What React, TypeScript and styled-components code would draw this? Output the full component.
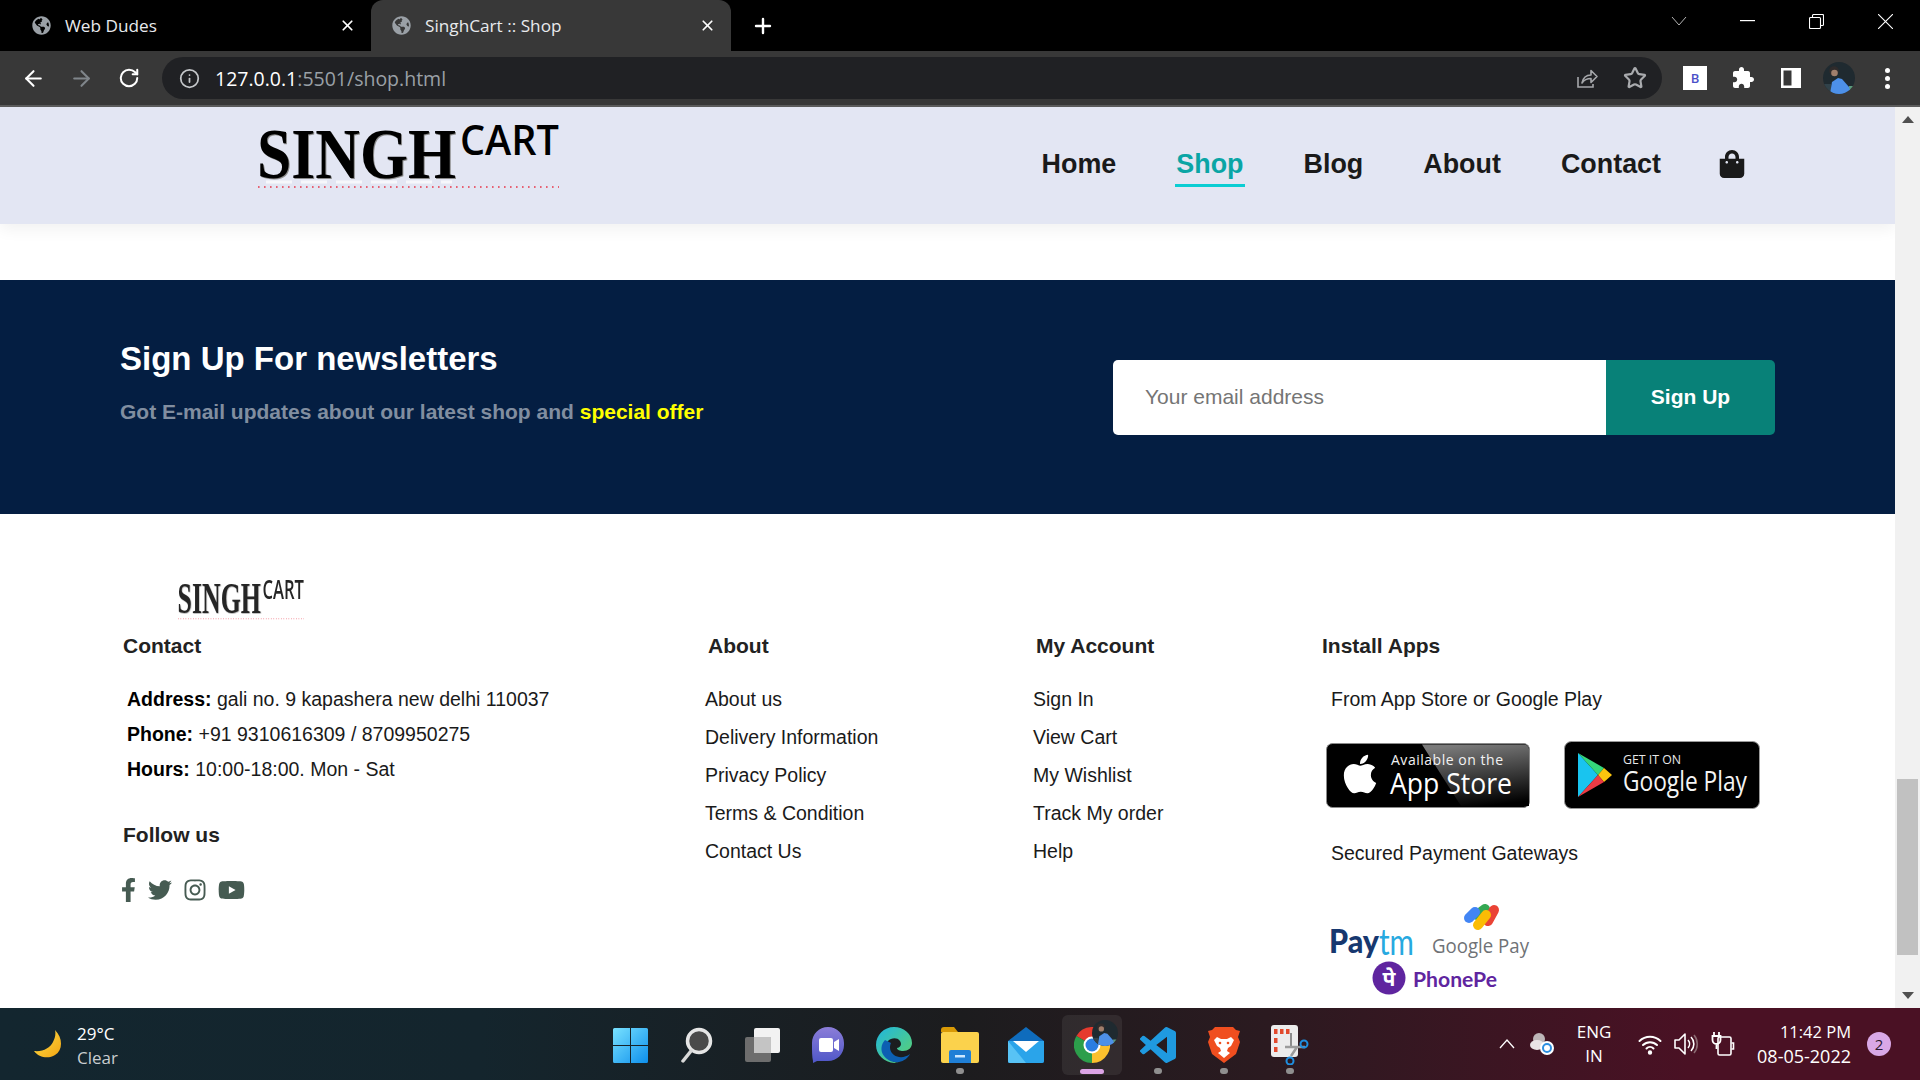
import React from "react";
import styled, { createGlobalStyle } from "styled-components";
import { ArrowLeft, ArrowRight, Info, Plus, RotateCw, Star, X } from "lucide-react";
import {
  FaApple,
  FaFacebookF,
  FaGlobeAmericas,
  FaInstagram,
  FaShoppingBag,
  FaTwitter,
  FaYoutube,
} from "react-icons/fa";

const GlobalStyle = createGlobalStyle`
  html, body {
    margin: 0;
    padding: 0;
    overflow: hidden;
  }
  * {
    box-sizing: border-box;
  }
  body {
    font-family: "Liberation Sans", Arial, sans-serif;
  }
`;

const UI_FONT = `"Open Sans", "Noto Sans", sans-serif`;
const navLinks = ["Home", "Shop", "Blog", "About", "Contact"];
const aboutLinks = ["About us", "Delivery Information", "Privacy Policy", "Terms & Condition", "Contact Us"];
const accountLinks = ["Sign In", "View Cart", "My Wishlist", "Track My order", "Help"];
const contactRows = [
  ["Address:", "gali no. 9 kapashera new delhi 110037"],
  ["Phone:", "+91 9310616309 / 8709950275"],
  ["Hours:", "10:00-18:00. Mon - Sat"],
];

const Logo = ({ width, height, faded }: { width: number; height: number; faded?: boolean }) => (
  <LogoSvg
    width={width}
    height={height}
    $faded={faded}
    viewBox="0 0 301 64"
    preserveAspectRatio="none"
  >
    {!faded && (
      <line x1="8" y1="57" x2="194" y2="57" stroke="#fff" strokeWidth="3" strokeDasharray="26 9" opacity="0.7" />
    )}
    <SinghText
      x="-1"
      y="53"
      fontFamily="'Liberation Serif', serif"
      fontWeight="700"
      fontSize="71"
      textLength="199"
      lengthAdjust="spacingAndGlyphs"
    >
      SINGH
    </SinghText>
    <text
      x="202"
      y="30"
      fontFamily="'Open Sans', sans-serif"
      fontWeight="600"
      fontSize="42"
      textLength="99"
      lengthAdjust="spacingAndGlyphs"
    >
      CART
    </text>
    <line x1="0" y1="62" x2="301" y2="62" stroke="#e8364a" strokeWidth="1.6" strokeDasharray="1.6 4.4" />
  </LogoSvg>
);

const SharedIcon = () => (
  <svg width="24" height="24" viewBox="0 0 24 24" fill="none" stroke="#a5a7aa" strokeWidth="1.6">
    <path d="M3 11v10h15v-3" />
    <path d="M7 17c1-5 4-8 9-8V4.500l6 6-6 6V12.500c-4 0-7 1.500-9 4.500z" strokeLinejoin="round" />
  </svg>
);

const PuzzleIcon = () => (
  <svg width="24" height="24" viewBox="0 0 24 24">
    <path
      d="M20.500 11H19V7c0-1.100-.9-2-2-2h-4V3.500C13 2.120 11.880 1 10.500 1S8 2.120 8 3.500V5H4c-1.100 0-1.990.9-1.990 2v3.800H3.500c1.490 0 2.700 1.210 2.700 2.700s-1.210 2.700-2.700 2.700H2V20c0 1.100.9 2 2 2h3.800v-1.500c0-1.490 1.210-2.700 2.700-2.700 1.490 0 2.700 1.210 2.700 2.700V22H17c1.100 0 2-.9 2-2v-4h1.500c1.380 0 2.500-1.120 2.500-2.500S21.880 11 20.500 11z"
      fill="#fff"
    />
  </svg>
);

const SidebarIcon = () => (
  <svg width="22" height="22" viewBox="0 0 22 22">
    <rect x="1" y="1" width="20" height="20" fill="#fff" />
    <rect x="3.500" y="3.500" width="8" height="15" fill="#383838" />
  </svg>
);

const Avatar = () => (
  <svg width="32" height="32" viewBox="0 0 32 32">
    <defs>
      <clipPath id="avatarClip">
        <circle cx="16" cy="16" r="16" />
      </clipPath>
    </defs>
    <g clipPath="url(#avatarClip)">
      <rect width="32" height="32" fill="#1f2a30" />
      <rect x="0" y="22" width="8" height="10" fill="#31424a" />
      <rect x="26" y="24" width="6" height="8" fill="#5d9c7c" />
      <circle cx="11" cy="9" r="4.800" fill="#2f2b2b" />
      <circle cx="11.500" cy="11" r="3.300" fill="#a07f6c" />
      <path d="M7 32l2-12 6-4 4 1 7 8 2 7z" fill="#4d90e8" />
    </g>
  </svg>
);

const MoonIcon = () => (
  <svg width="28" height="28" viewBox="0 0 28 28">
    <defs>
      <linearGradient id="moonFill" x1="0" y1="0" x2="1" y2="1">
        <stop offset="0" stopColor="#ffe14a" />
        <stop offset="1" stopColor="#f3a512" />
      </linearGradient>
    </defs>
    <path d="M21 0C29 8 29 20 21 25 15 29 5 28 0 21 9 22 16 18 19 12 21 8 22 4 21 0z" fill="url(#moonFill)" />
  </svg>
);

const WindowsIcon = () => (
  <svg width="35" height="35" viewBox="0 0 35 35">
    <defs>
      <linearGradient id="winFill" x1="0" y1="0" x2="1" y2="1">
        <stop offset="0" stopColor="#79e2ff" />
        <stop offset="1" stopColor="#0d8fec" />
      </linearGradient>
    </defs>
    <path d="M0 1.500A1.500 1.500 0 0 1 1.500 0H17v17H0zM18 0h15.500A1.500 1.500 0 0 1 35 1.500V17H18zM0 18h17v17H1.500A1.500 1.500 0 0 1 0 33.500zM18 18h17v15.500a1.500 1.500 0 0 1-1.500 1.500H18z" fill="url(#winFill)" />
  </svg>
);

const SearchIcon = () => (
  <svg width="34" height="36" viewBox="0 0 34 36">
    <circle cx="20" cy="14" r="11.500" fill="#4a4a4a" stroke="#e6e6e6" strokeWidth="3.500" />
    <line x1="12" y1="24" x2="4" y2="34" stroke="#d9d9d9" strokeWidth="3.500" strokeLinecap="round" />
  </svg>
);

const TaskViewIcon = () => (
  <svg width="36" height="36" viewBox="0 0 36 36">
    <rect x="1" y="10" width="26" height="25" rx="2" fill="#6d6d6d" />
    <rect x="10" y="1" width="26" height="25" rx="2" fill="#f2f2f2" />
    <path d="M10 10h17v16H10z" fill="#c4c4c4" />
  </svg>
);

const MeetIcon = () => (
  <svg width="34" height="36" viewBox="0 0 34 36">
    <defs>
      <linearGradient id="meetFill" x1="0" y1="0" x2="0" y2="1">
        <stop offset="0" stopColor="#8b7dd8" />
        <stop offset="1" stopColor="#4f57c8" />
      </linearGradient>
    </defs>
    <path d="M17 0c9 0 16 7 16 16v2c0 9-7 16-16 16H6l-4 2v-2C1 30 1 24 1 18v-2C1 7 8 0 17 0z" fill="url(#meetFill)" />
    <rect x="8" y="11" width="14" height="14" rx="2" fill="#fff" />
    <path d="M23 15l5-3v12l-5-3z" fill="#fff" />
  </svg>
);

const EdgeIcon = () => (
  <svg width="36" height="36" viewBox="0 0 36 36">
    <defs>
      <linearGradient id="edgeTop" x1="0" y1="0" x2="1" y2="1">
        <stop offset="0" stopColor="#1fb6e0" />
        <stop offset="1" stopColor="#5fd36a" />
      </linearGradient>
    </defs>
    <path d="M18 0c10 0 18 7 18 16 0 5-4 8-9 8-3 0-6-1-6-3 4-1 5-4 3-7-3-4-9-3-12 0-4 4-4 12 1 17 3 3 6 5 10 5C10 37 0 29 0 18 0 8 8 0 18 0z" fill="url(#edgeTop)" />
    <path d="M9 13c-4 4-5 11-1 16 3 4 9 7 15 6 5-1 9-4 11-8-5 4-12 4-16 1-4-3-5-8-3-12-2-1-4-2-6-3z" fill="#0c5fb2" />
  </svg>
);

const FolderIcon = () => (
  <svg width="38" height="36" viewBox="0 0 38 36">
    <path d="M0 3a3 3 0 0 1 3-3h10l4 5H0z" fill="#d99a06" />
    <rect x="0" y="5" width="38" height="31" rx="2" fill="#fbd24c" />
    <path d="M10 23h18a2 2 0 0 1 2 2v11H8V25a2 2 0 0 1 2-2z" fill="#1f7fd6" />
    <rect x="14" y="28" width="10" height="2.500" fill="#cde8ff" />
  </svg>
);

const MailIcon = () => (
  <svg width="36" height="36" viewBox="0 0 36 36">
    <path d="M18 0L0 14v20a2 2 0 0 0 2 2h32a2 2 0 0 0 2-2V14z" fill="#0f6cbd" />
    <path d="M0 14h36v20a2 2 0 0 1-2 2H2a2 2 0 0 1-2-2z" fill="#2aa4ea" />
    <path d="M5 14h26L18 25z" fill="#fff" />
    <path d="M0 14l18 22H2a2 2 0 0 1-2-2z" fill="#58c3f5" />
  </svg>
);

const ChromeIcon = () => (
  <svg width="36" height="36" viewBox="0 0 36 36">
    <path d="M18 18L2.400 9A18 18 0 0 1 33.600 9z" fill="#e53a2e" />
    <path d="M18 18l-15.600-9A18 18 0 0 0 18 36z" fill="#2c9e4b" />
    <path d="M18 18l15.600-9A18 18 0 0 1 18 36z" fill="#fbc02d" />
    <circle cx="18" cy="18" r="8.500" fill="#fff" />
    <circle cx="18" cy="18" r="6.500" fill="#2a7de1" />
  </svg>
);

const VsCodeIcon = () => (
  <svg width="36" height="36" viewBox="0 0 24 24">
    <path
      d="M23.150 2.587L18.210.21a1.494 1.494 0 0 0-1.705.29l-9.460 8.630-4.120-3.128a.999.999 0 0 0-1.276.057L.327 7.261A1 1 0 0 0 .326 8.740L3.899 12 .326 15.260a1 1 0 0 0 .001 1.479L1.650 17.940a.999.999 0 0 0 1.276.057l4.120-3.128 9.460 8.630a1.492 1.492 0 0 0 1.704.29l4.942-2.377A1.500 1.500 0 0 0 24 20.060V3.939a1.500 1.500 0 0 0-.850-1.352zm-5.146 14.861L10.826 12l7.178-5.448v10.896z"
      fill="#1f9ae0"
    />
  </svg>
);

const BraveIcon = () => (
  <svg width="32" height="36" viewBox="0 0 32 36">
    <path d="M7 0h18l3 3 4 1-2 6 2 5-4 12-12 9-12-9L0 15l2-5-2-6 4-1z" fill="#f04e1f" />
    <path d="M9 10l4 2h6l4-2 3 3-3 6-3 2-1 3 3 2-6 5-6-5 3-2-1-3-3-2-3-6z" fill="#fff" />
    <circle cx="12" cy="16" r="1.300" fill="#f04e1f" />
    <circle cx="20" cy="16" r="1.300" fill="#f04e1f" />
  </svg>
);

const SnipIcon = () => (
  <svg width="38" height="40" viewBox="0 0 38 40">
    <rect x="0" y="0" width="27" height="32" rx="3" fill="#ececec" />
    <rect x="3" y="4" width="3.500" height="5" fill="#e2492c" />
    <rect x="9" y="4" width="3.500" height="5" fill="#e2492c" />
    <rect x="15" y="4" width="3.500" height="5" fill="#e2492c" />
    <rect x="3" y="13" width="3.500" height="5" fill="#e2492c" />
    <rect x="3" y="22" width="3.500" height="5" fill="#e2492c" />
    <path d="M20 8v14h6" stroke="#8d8d8d" strokeWidth="2" fill="none" />
    <path d="M14 22h20M26 22l-6 9" stroke="#9b9b9b" strokeWidth="2.500" />
    <circle cx="33" cy="19" r="3.500" fill="none" stroke="#1f8fe0" strokeWidth="2" />
    <circle cx="19" cy="36" r="3.500" fill="none" stroke="#1f8fe0" strokeWidth="2" />
  </svg>
);

const CloudIcon = () => (
  <svg width="26" height="26" viewBox="0 0 26 26">
    <circle cx="10" cy="8" r="6" fill="#bdb6b8" />
    <ellipse cx="8" cy="14" rx="7" ry="5" fill="#e8e4e5" />
    <circle cx="18" cy="17" r="7" fill="#fff" />
    <circle cx="18" cy="17" r="4" fill="none" stroke="#2d8fe0" strokeWidth="2" />
  </svg>
);

const WifiIcon = () => (
  <svg width="24" height="22" viewBox="0 0 24 22" fill="none" stroke="#fff" strokeWidth="2" strokeLinecap="round">
    <path d="M1.500 8a15 15 0 0 1 21 0M5 12a10 10 0 0 1 14 0M8.500 15.500a5 5 0 0 1 7 0" />
    <circle cx="12" cy="19.500" r="1.200" fill="#fff" />
  </svg>
);

const VolumeIcon = () => (
  <svg width="26" height="24" viewBox="0 0 26 24" fill="none" stroke="#fff" strokeWidth="1.600">
    <path d="M2 8h4l6-6v20l-6-6H2z" strokeLinejoin="round" />
    <path d="M15 8a6 6 0 0 1 0 8M18 5a10 10 0 0 1 0 14" />
    <path d="M21 3a14 14 0 0 1 0 18" stroke="#8b6a72" />
  </svg>
);

const BatteryIcon = () => (
  <svg width="24" height="26" viewBox="0 0 24 26" fill="none" stroke="#fff" strokeWidth="1.600">
    <rect x="7" y="6" width="13" height="18" rx="1.500" />
    <path d="M20.500 12h2v6h-2" />
    <path d="M3 1v4M8 1v4M1.500 5h8v4a4 4 0 0 1-8 0zM5.500 13v5" strokeWidth="1.800" />
  </svg>
);

const AppStoreBadge = () => (
  <BadgeSvg width="204" height="65" viewBox="0 0 204 65">
    <defs>
      <linearGradient id="gloss" x1="0.400" y1="0" x2="0.600" y2="1">
        <stop offset="0" stopColor="#7a7a7a" />
        <stop offset="1" stopColor="#000" />
      </linearGradient>
    </defs>
    <rect x="0.500" y="0.500" width="203" height="64" rx="6" fill="#000" stroke="#8a8a8a" />
    <path d="M96 1.500h102a5 5 0 0 1 5 5V63h-68z" fill="url(#gloss)" />
    <FaApple x="12" y="9" size={44} color="#fff" />
    <text x="65" y="22" fontFamily="'Open Sans', sans-serif" fontSize="14" fill="#f2f2f2" textLength="112" lengthAdjust="spacing">
      Available on the
    </text>
    <text x="64" y="51" fontFamily="'Open Sans', sans-serif" fontSize="30" fill="#fff" textLength="122" lengthAdjust="spacingAndGlyphs">
      App Store
    </text>
  </BadgeSvg>
);

const PlayBadge = () => (
  <BadgeSvg width="196" height="68" viewBox="0 0 196 68">
    <rect x="0.500" y="0.500" width="195" height="67" rx="7" fill="#000" stroke="#9a9a9a" />
    <path d="M14 12l20 22-20 22z" fill="#19c4ef" />
    <path d="M14 12l26 15-6 7z" fill="#35d67a" />
    <path d="M40 27l8 7-8 7-6-7z" fill="#fcc60e" />
    <path d="M14 56l26-15-6-7z" fill="#ec3b45" />
    <text x="59" y="23" fontFamily="'Open Sans', sans-serif" fontSize="13" fill="#e8e8e8" textLength="58" lengthAdjust="spacingAndGlyphs">
      GET IT ON
    </text>
    <text x="59" y="50" fontFamily="'Open Sans', sans-serif" fontSize="28" fill="#f4f4f4" textLength="124" lengthAdjust="spacingAndGlyphs">
      Google Play
    </text>
  </BadgeSvg>
);

const PaymentLogos = () => (
  <PaymentSvg width="205" height="100" viewBox="0 0 205 100">
    <text x="2" y="50" fontFamily="'Lato', sans-serif" fontWeight="900" fontSize="33" fill="#17386f" textLength="50" lengthAdjust="spacingAndGlyphs">
      Pay
    </text>
    <text x="52" y="52" fontFamily="'Lato', sans-serif" fontWeight="400" fontSize="36" fill="#27a9e0" textLength="35" lengthAdjust="spacingAndGlyphs">
      tm
    </text>
    <g strokeWidth="10" strokeLinecap="round" fill="none">
      <path d="M150 12l8-6" stroke="#34a853" />
      <path d="M167 7l-6 11" stroke="#ea4335" />
      <path d="M142 15l6-6" stroke="#4285f4" />
      <path d="M151 22l8-10" stroke="#fbbc04" />
    </g>
    <text x="105" y="50" fontFamily="'Open Sans', sans-serif" fontSize="20" fill="#6f7276" textLength="97" lengthAdjust="spacingAndGlyphs">
      Google Pay
    </text>
    <circle cx="62" cy="75" r="16.500" fill="#5f259f" />
    <text x="62" y="83" textAnchor="middle" fontFamily="'Noto Sans', 'Liberation Sans', sans-serif" fontWeight="700" fontSize="21" fill="#fff">
      पे
    </text>
    <text x="86" y="84" fontFamily="'Lato', sans-serif" fontWeight="700" fontSize="21" fill="#5f259f" textLength="84" lengthAdjust="spacingAndGlyphs">
      PhonePe
    </text>
  </PaymentSvg>
);

const taskbarIcons = [
  { id: "start", icon: <WindowsIcon /> },
  { id: "search", icon: <SearchIcon /> },
  { id: "taskview", icon: <TaskViewIcon /> },
  { id: "meet", icon: <MeetIcon /> },
  { id: "edge", icon: <EdgeIcon /> },
  { id: "explorer", icon: <FolderIcon />, running: true },
  { id: "mail", icon: <MailIcon /> },
  { id: "chrome", icon: <ChromeIcon />, running: true, active: true },
  { id: "vscode", icon: <VsCodeIcon />, running: true },
  { id: "brave", icon: <BraveIcon />, running: true },
  { id: "snip", icon: <SnipIcon />, running: true },
];

const App = () => {
  return (
    <Screen>
      <GlobalStyle />
      <TabBar>
        <Tab>
          <FaGlobeAmericas size={19} color="#9aa0a6" />
          <TabTitle>Web Dudes</TabTitle>
          <X size={17} color="#fff" strokeWidth={2.4} />
        </Tab>
        <Tab $active>
          <FaGlobeAmericas size={19} color="#9aa0a6" />
          <TabTitle>SinghCart :: Shop</TabTitle>
          <X size={17} color="#fff" strokeWidth={2.4} />
        </Tab>
        <NewTab>
          <Plus size={24} color="#fff" strokeWidth={2.4} />
        </NewTab>
        <WindowControls>
          <ControlButton>
            <svg width="16" height="10" viewBox="0 0 16 10" fill="none" stroke="#b5b5b5">
              <path d="M1 1l7 8 7-8" />
            </svg>
          </ControlButton>
          <ControlButton>
            <svg width="15" height="2" viewBox="0 0 15 2">
              <rect width="15" height="1.200" fill="#fff" />
            </svg>
          </ControlButton>
          <ControlButton>
            <svg width="15" height="15" viewBox="0 0 15 15" fill="none" stroke="#fff" strokeWidth="1.100">
              <rect x="0.500" y="3.500" width="11" height="11" rx="1" />
              <path d="M3.500 3.500V1.500a1 1 0 0 1 1-1h9a1 1 0 0 1 1 1v9a1 1 0 0 1-1 1h-2" />
            </svg>
          </ControlButton>
          <ControlButton>
            <svg width="15" height="15" viewBox="0 0 15 15" stroke="#fff" strokeWidth="1.100">
              <path d="M0 0l15 15M15 0L0 15" />
            </svg>
          </ControlButton>
        </WindowControls>
      </TabBar>

      <Toolbar>
        <ToolSlot>
          <ArrowLeft size={25} color="#fff" />
        </ToolSlot>
        <ToolSlot>
          <ArrowRight size={25} color="#80868b" />
        </ToolSlot>
        <ToolSlot>
          <RotateCw size={22} color="#fff" strokeWidth={2.2} />
        </ToolSlot>
        <Omnibox>
          <Info size={21} color="#c4c7ca" />
          <UrlText>
            127.0.0.1<UrlMuted>:5501/shop.html</UrlMuted>
          </UrlText>
          <OmniboxActions>
            <SharedIcon />
            <Star size={24} color="#a9abae" strokeWidth={2.2} />
          </OmniboxActions>
        </Omnibox>
        <ToolSlot>
          <ExtensionBadge>B</ExtensionBadge>
        </ToolSlot>
        <ToolSlot>
          <PuzzleIcon />
        </ToolSlot>
        <ToolSlot>
          <SidebarIcon />
        </ToolSlot>
        <ToolSlot>
          <Avatar />
        </ToolSlot>
        <ToolSlot>
          <MenuDots>
            <i />
            <i />
            <i />
          </MenuDots>
        </ToolSlot>
      </Toolbar>

      <Viewport>
        <Page>
          <NavBar>
            <Logo width={301} height={64} />
            <NavList>
              {navLinks.map((link) => (
                <NavItem key={link} $active={link === "Shop"}>
                  {link}
                </NavItem>
              ))}
              <BagLink>
                <FaShoppingBag size={28} color="#1a1a1a" />
              </BagLink>
            </NavList>
          </NavBar>

          <Newsletter>
            <NewsText>
              <NewsTitle>Sign Up For newsletters</NewsTitle>
              <NewsSub>
                Got E-mail updates about our latest shop and <Highlight>special offer</Highlight>
              </NewsSub>
            </NewsText>
            <SignupForm>
              <EmailInput placeholder="Your email address" readOnly />
              <SignupButton>Sign Up</SignupButton>
            </SignupForm>
          </Newsletter>

          <Footer>
            <FooterLogo>
              <Logo width={126} height={40} faded />
            </FooterLogo>
            <FooterGrid>
              <FooterColumn>
                <FooterHeading>Contact</FooterHeading>
                <ContactList>
                  {contactRows.map(([label, value]) => (
                    <ContactRow key={label}>
                      <strong>{label}</strong> {value}
                    </ContactRow>
                  ))}
                </ContactList>
                <FollowHeading>Follow us</FollowHeading>
                <SocialRow>
                  <SocialIcon $width={15}>
                    <FaFacebookF />
                  </SocialIcon>
                  <SocialIcon $width={24}>
                    <FaTwitter />
                  </SocialIcon>
                  <SocialIcon $width={22}>
                    <FaInstagram />
                  </SocialIcon>
                  <SocialIcon $width={27}>
                    <FaYoutube />
                  </SocialIcon>
                </SocialRow>
              </FooterColumn>

              <FooterColumn>
                <FooterHeading $indent={3}>About</FooterHeading>
                <LinkList>
                  {aboutLinks.map((link) => (
                    <FooterLink key={link}>{link}</FooterLink>
                  ))}
                </LinkList>
              </FooterColumn>

              <FooterColumn>
                <FooterHeading $indent={3}>My Account</FooterHeading>
                <LinkList>
                  {accountLinks.map((link) => (
                    <FooterLink key={link}>{link}</FooterLink>
                  ))}
                </LinkList>
              </FooterColumn>

              <FooterColumn>
                <FooterHeading>Install Apps</FooterHeading>
                <InstallText $top={22}>From App Store or Google Play</InstallText>
                <BadgeRow>
                  <AppStoreBadge />
                  <PlayBadge />
                </BadgeRow>
                <InstallText $top={25}>Secured Payment Gateways</InstallText>
                <PaymentLogos />
              </FooterColumn>
            </FooterGrid>
          </Footer>
        </Page>

        <ScrollTrack>
          <ScrollArrow $up />
          <ScrollThumb />
          <ScrollArrow />
        </ScrollTrack>
      </Viewport>

      <Taskbar>
        <Weather>
          <MoonIcon />
          <WeatherText>
            <span>29°C</span>
            <WeatherMuted>Clear</WeatherMuted>
          </WeatherText>
        </Weather>
        <TaskIcons>
          {taskbarIcons.map((item) => (
            <TaskSlot key={item.id} $active={item.active}>
              {item.icon}
              {item.id === "chrome" && (
                <ChromeAvatar>
                  <Avatar />
                </ChromeAvatar>
              )}
              {item.running && <TaskDot $active={item.active} />}
            </TaskSlot>
          ))}
        </TaskIcons>
        <Tray>
          <TrayItem $gap={0}>
            <svg width="16" height="10" viewBox="0 0 16 10" fill="none" stroke="#fff" strokeWidth="1.300">
              <path d="M1 9l7-8 7 8" />
            </svg>
          </TrayItem>
          <TrayItem $gap={14}>
            <CloudIcon />
          </TrayItem>
          <TrayText $gap={18}>
            <span>ENG</span>
            <span>IN</span>
          </TrayText>
          <TrayItem $gap={23}>
            <WifiIcon />
          </TrayItem>
          <TrayItem $gap={11}>
            <VolumeIcon />
          </TrayItem>
          <TrayItem $gap={12}>
            <BatteryIcon />
          </TrayItem>
          <Clock>
            <span>11:42 PM</span>
            <ClockDate>08-05-2022</ClockDate>
          </Clock>
          <NotifyBadge>2</NotifyBadge>
        </Tray>
      </Taskbar>
    </Screen>
  );
};
export default App;

const LogoSvg = styled.svg<{ $faded?: boolean }>`
  display: block;
  flex-shrink: 0;
  overflow: visible;
  opacity: ${({ $faded }) => ($faded ? 0.85 : 1)};
`;

const SinghText = styled.text`
  filter: drop-shadow(1.5px 1px 0 #8a8a8a);
`;

const BadgeSvg = styled.svg`
  display: block;
  flex-shrink: 0;
`;

const PaymentSvg = styled.svg`
  display: block;
  margin: 31px 0 0 5px;
`;

const Screen = styled.div`
  display: flex;
  flex-direction: column;
  width: 1920px;
  height: 1080px;
  overflow: hidden;
  background-color: #fff;
`;

const TabBar = styled.div`
  display: flex;
  align-items: stretch;
  height: 51px;
  padding-left: 11px;
  background-color: #000;
`;

const Tab = styled.div<{ $active?: boolean }>`
  display: flex;
  align-items: center;
  gap: 14px;
  width: 360px;
  padding: 0 15px 0 21px;
  border-radius: 12px 12px 0 0;
  background-color: ${({ $active }) => ($active ? "#383838" : "transparent")};
  color: #e8eaed;
  font-family: ${UI_FONT};
  font-size: 17.2px;
`;

const TabTitle = styled.span`
  flex: 1;
  white-space: nowrap;
`;

const NewTab = styled.div`
  display: flex;
  align-items: center;
  margin-left: 20px;
`;

const WindowControls = styled.div`
  display: flex;
  margin-left: auto;
`;

const ControlButton = styled.div`
  display: flex;
  align-items: center;
  justify-content: center;
  width: 69px;
  height: 42px;
`;

const Toolbar = styled.div`
  display: flex;
  align-items: center;
  height: 56px;
  padding: 0 9px;
  background-color: #383838;
  border-bottom: 2px solid #5c5c5c;
`;

const ToolSlot = styled.div`
  display: flex;
  align-items: center;
  justify-content: center;
  width: 48px;
  height: 42px;
  flex-shrink: 0;
`;

const Omnibox = styled.div`
  display: flex;
  align-items: center;
  gap: 15px;
  width: 1500px;
  height: 42px;
  margin: 0 9px;
  padding: 0 15px 0 17px;
  border-radius: 21px;
  background-color: #202124;
`;

const UrlText = styled.span`
  color: #fff;
  font-family: ${UI_FONT};
  font-size: 19.5px;
`;

const UrlMuted = styled.span`
  color: #9aa0a6;
`;

const OmniboxActions = styled.div`
  display: flex;
  align-items: center;
  gap: 24px;
  margin-left: auto;
`;

const ExtensionBadge = styled.div`
  display: flex;
  align-items: center;
  justify-content: center;
  width: 24px;
  height: 24px;
  background-color: #fff;
  color: #4a50c8;
  font-family: ${UI_FONT};
  font-size: 13px;
  font-weight: 600;
`;

const MenuDots = styled.div`
  display: flex;
  flex-direction: column;
  gap: 3px;

  i {
    display: block;
    width: 5px;
    height: 5px;
    border-radius: 50%;
    background-color: #fff;
  }
`;

const Viewport = styled.div`
  display: flex;
  height: 901px;
`;

const Page = styled.div`
  flex: 1;
  min-width: 0;
`;

const NavBar = styled.nav`
  display: flex;
  justify-content: space-between;
  align-items: flex-start;
  height: 117px;
  padding: 18px 149px 0 258px;
  background-color: #e3e6f3;
  box-shadow: 0 5px 15px rgba(0, 0, 0, 0.06);
`;

const NavList = styled.ul`
  display: flex;
  align-items: center;
  gap: 60px;
  margin: 24px 0 0;
  padding: 0;
  list-style: none;
`;

const NavItem = styled.li<{ $active?: boolean }>`
  position: relative;
  color: ${({ $active }) => ($active ? "#0aa5a5" : "#1a1a1a")};
  font-size: 26.9px;
  font-weight: 700;
  line-height: 30px;

  ${({ $active }) =>
    $active &&
    `
    &::after {
      content: "";
      position: absolute;
      left: -1px;
      right: -1px;
      bottom: -8px;
      height: 3px;
      background-color: #0ccdd3;
    }
  `}
`;

const BagLink = styled.li`
  display: flex;
  margin: -1px 0 0 -3px;
`;

const Newsletter = styled.section`
  display: flex;
  justify-content: space-between;
  align-items: center;
  height: 234px;
  margin-top: 56px;
  padding: 0 120px;
  background-color: #041e42;
`;

const NewsText = styled.div`
  align-self: flex-start;
  padding-top: 60px;
`;

const NewsTitle = styled.h2`
  margin: 0 0 22px;
  color: #fff;
  font-size: 33px;
  font-weight: 700;
  line-height: 38px;
`;

const NewsSub = styled.p`
  margin: 0;
  color: #818ea0;
  font-size: 21px;
  font-weight: 700;
  line-height: 24px;
`;

const Highlight = styled.span`
  color: #ffff00;
`;

const SignupForm = styled.div`
  display: flex;
  width: 662px;
  height: 75px;
`;

const EmailInput = styled.input`
  width: 493px;
  height: 100%;
  padding: 0 32px;
  border: none;
  border-radius: 5px 0 0 5px;
  outline: none;
  background-color: #fff;
  font-family: "Liberation Sans", Arial, sans-serif;
  font-size: 21px;

  &::placeholder {
    color: #757575;
  }
`;

const SignupButton = styled.button`
  flex: 1;
  border: none;
  border-radius: 0 5px 5px 0;
  background-color: #088178;
  color: #fff;
  font-family: "Liberation Sans", Arial, sans-serif;
  font-size: 21px;
  font-weight: 700;
`;

const Footer = styled.footer`
  height: 494px;
  padding-top: 66px;
  overflow: hidden;
  background-color: #fff;
  color: #1a1a1a;
`;

const FooterLogo = styled.div`
  margin-left: 178px;
`;

const FooterGrid = styled.div`
  display: grid;
  grid-template-columns: 582px 328px 289px 1fr;
  margin-top: 14px;
  padding-left: 123px;
`;

const FooterColumn = styled.div`
  min-width: 0;
`;

const FooterHeading = styled.h4<{ $indent?: number }>`
  margin: 0;
  padding-left: ${({ $indent }) => $indent ?? 0}px;
  color: #222;
  font-size: 21px;
  font-weight: 700;
  line-height: 24px;
`;

const FollowHeading = styled(FooterHeading)`
  margin-top: 36px;
`;

const ContactList = styled.div`
  margin-top: 24px;
  padding-left: 4px;
`;

const ContactRow = styled.p`
  margin: 0;
  font-size: 19.5px;
  line-height: 35px;

  strong {
    color: #000;
  }
`;

const SocialRow = styled.div`
  display: flex;
  align-items: center;
  gap: 12px;
  margin: 31px 0 0 -2px;
  color: #465b52;
`;

const SocialIcon = styled.span<{ $width: number }>`
  display: block;
  width: ${({ $width }) => $width}px;
  height: 24px;

  svg {
    display: block;
    width: 100%;
    height: 100%;
  }
`;

const LinkList = styled.div`
  margin-top: 22px;
`;

const FooterLink = styled.div`
  font-size: 19.5px;
  line-height: 38px;
`;

const InstallText = styled.p<{ $top: number }>`
  margin: ${({ $top }) => $top}px 0 0 9px;
  font-size: 19.5px;
  line-height: 38px;
`;

const BadgeRow = styled.div`
  display: flex;
  align-items: center;
  gap: 34px;
  margin: 23px 0 0 4px;
`;

const ScrollTrack = styled.div`
  display: flex;
  flex-direction: column;
  align-items: center;
  width: 25px;
  background-color: #f1f1f1;
`;

const ScrollArrow = styled.div<{ $up?: boolean }>`
  width: 0;
  height: 0;
  margin: ${({ $up }) => ($up ? "9px 0 auto" : "0 0 9px")};
  border-left: 6px solid transparent;
  border-right: 6px solid transparent;
  border-${({ $up }) => ($up ? "bottom" : "top")}: 7px solid #505050;
`;

const ScrollThumb = styled.div`
  width: 21px;
  height: 176px;
  margin-bottom: 37px;
  background-color: #c1c1c1;
`;

const Taskbar = styled.div`
  display: grid;
  grid-template-columns: 1fr auto 1fr;
  align-items: center;
  height: 72px;
  background: linear-gradient(90deg, #13262f 0%, #14252d 25%, #1c1c1e 50%, #2b1a20 66%, #4a1124 88%, #4a1124 100%);
`;

const Weather = styled.div`
  display: flex;
  align-items: center;
  gap: 15px;
  padding-left: 34px;
`;

const WeatherText = styled.div`
  display: flex;
  flex-direction: column;
  padding-top: 4px;
  color: #fff;
  font-family: ${UI_FONT};
  font-size: 17px;
  line-height: 24px;
`;

const WeatherMuted = styled.span`
  color: #c9cdd0;
`;

const TaskIcons = styled.div`
  display: flex;
`;

const TaskSlot = styled.div<{ $active?: boolean }>`
  position: relative;
  display: flex;
  align-items: center;
  justify-content: center;
  width: 66px;
  height: 72px;
  padding-top: 2px;

  ${({ $active }) =>
    $active &&
    `
    &::before {
      content: "";
      position: absolute;
      left: 3px;
      right: 3px;
      top: 7px;
      bottom: 5px;
      border-radius: 6px;
      background-color: rgba(255, 255, 255, 0.07);
    }
  `}

  > svg {
    position: relative;
  }
`;

const ChromeAvatar = styled.div`
  position: absolute;
  top: 12px;
  left: 33px;
  width: 26px;
  height: 26px;

  svg {
    width: 26px;
    height: 26px;
  }
`;

const TaskDot = styled.span<{ $active?: boolean }>`
  position: absolute;
  left: 50%;
  bottom: 6px;
  width: ${({ $active }) => ($active ? 24 : 8)}px;
  height: ${({ $active }) => ($active ? 5 : 6)}px;
  border-radius: 3px;
  background-color: ${({ $active }) => ($active ? "#dca4e6" : "#8f8f8f")};
  transform: translateX(-50%);
`;

const Tray = styled.div`
  display: flex;
  align-items: center;
  justify-content: flex-end;
  padding-right: 29px;
  color: #fff;
  font-family: ${UI_FONT};
`;

const TrayItem = styled.div<{ $gap: number }>`
  display: flex;
  margin-left: ${({ $gap }) => $gap}px;
`;

const TrayText = styled.div<{ $gap: number }>`
  display: flex;
  flex-direction: column;
  align-items: center;
  width: 42px;
  margin-left: ${({ $gap }) => $gap}px;
  font-size: 17px;
  line-height: 24px;
`;

const Clock = styled.div`
  display: flex;
  flex-direction: column;
  align-items: flex-end;
  margin-left: 22px;
  font-size: 16.5px;
  line-height: 24px;
  white-space: nowrap;
`;

const ClockDate = styled.span`
  font-size: 18px;
`;

const NotifyBadge = styled.div`
  display: flex;
  align-items: center;
  justify-content: center;
  width: 24px;
  height: 24px;
  margin-left: 16px;
  border-radius: 50%;
  background-color: #d9a8e6;
  color: #2a1a2e;
  font-size: 15px;
`;
